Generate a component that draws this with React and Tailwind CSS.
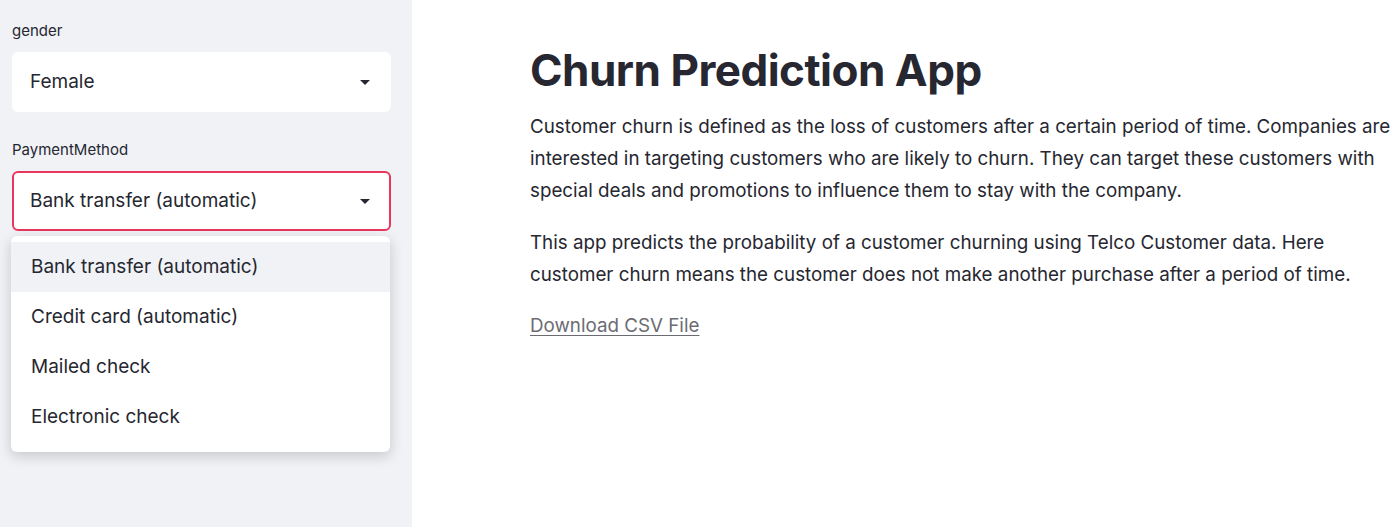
const options = ['Bank transfer (automatic)', 'Credit card (automatic)', 'Mailed check', 'Electronic check']

function Caret() {
  return (
    <svg width="10" height="5" viewBox="0 0 10 5" className="shrink-0">
      <path d="M0 0h10L5 5z" fill="#262730" />
    </svg>
  )
}

function Select({ value, focused }) {
  return (
    <div
      className={`h-[60px] rounded-md bg-white flex items-center justify-between text-[19px] ${
        focused ? 'border-[2px] border-[#e8365e] pl-[16px] pr-[19px]' : 'pl-[18px] pr-[21px]'
      }`}
    >
      <span>{value}</span>
      <Caret />
    </div>
  )
}

export default function App() {
  return (
    <div
      className="flex w-[1400px] h-[527px] overflow-hidden text-[#262730]"
      style={{ fontFamily: 'Inter, "Open Sans", sans-serif' }}
    >
      {/* Sidebar */}
      <aside className="w-[412px] shrink-0 bg-[#f0f2f6] pl-3 pr-[21px] pt-[19px] relative">
        <div className="text-[15px] leading-[23px] mb-[10px]">gender</div>
        <Select value="Female" />
        <div className="text-[15px] leading-[23px] mt-[26px] mb-[10px]">PaymentMethod</div>
        <Select value="Bank transfer (automatic)" focused />

        <div className="absolute left-[11px] top-[236px] w-[379px] bg-white rounded-md shadow-[0_4px_14px_rgba(0,0,0,0.18)] pt-[6px] pb-[10px]">
          {options.map((o, i) => (
            <div
              key={o}
              className={`h-[50px] flex items-center pl-[20px] text-[19px] ${i === 0 ? 'bg-[#f0f2f6]' : ''}`}
            >
              {o}
            </div>
          ))}
        </div>
      </aside>

      {/* Main */}
      <main className="flex-1 bg-white pl-[118px] pt-[42px]">
        <h1 className="text-[44px] leading-[56px] font-bold tracking-[-0.5px] mb-[13px]">Churn Prediction App</h1>
        <p className="w-[866px] text-[18.8px] leading-[32px] mb-[20px]">
          Customer churn is defined as the loss of customers after a certain period of time. Companies are
          interested in targeting customers who are likely to churn. They can target these customers with
          special deals and promotions to influence them to stay with the company.
        </p>
        <p className="w-[866px] text-[18.8px] leading-[32px] mb-[19px]">
          This app predicts the probability of a customer churning using Telco Customer data. Here
          customer churn means the customer does not make another purchase after a period of time.
        </p>
        <a href="#" className="text-[18.8px] leading-[32px] text-[#6b6c73] underline underline-offset-[3px]">
          Download CSV File
        </a>
      </main>
    </div>
  )
}
